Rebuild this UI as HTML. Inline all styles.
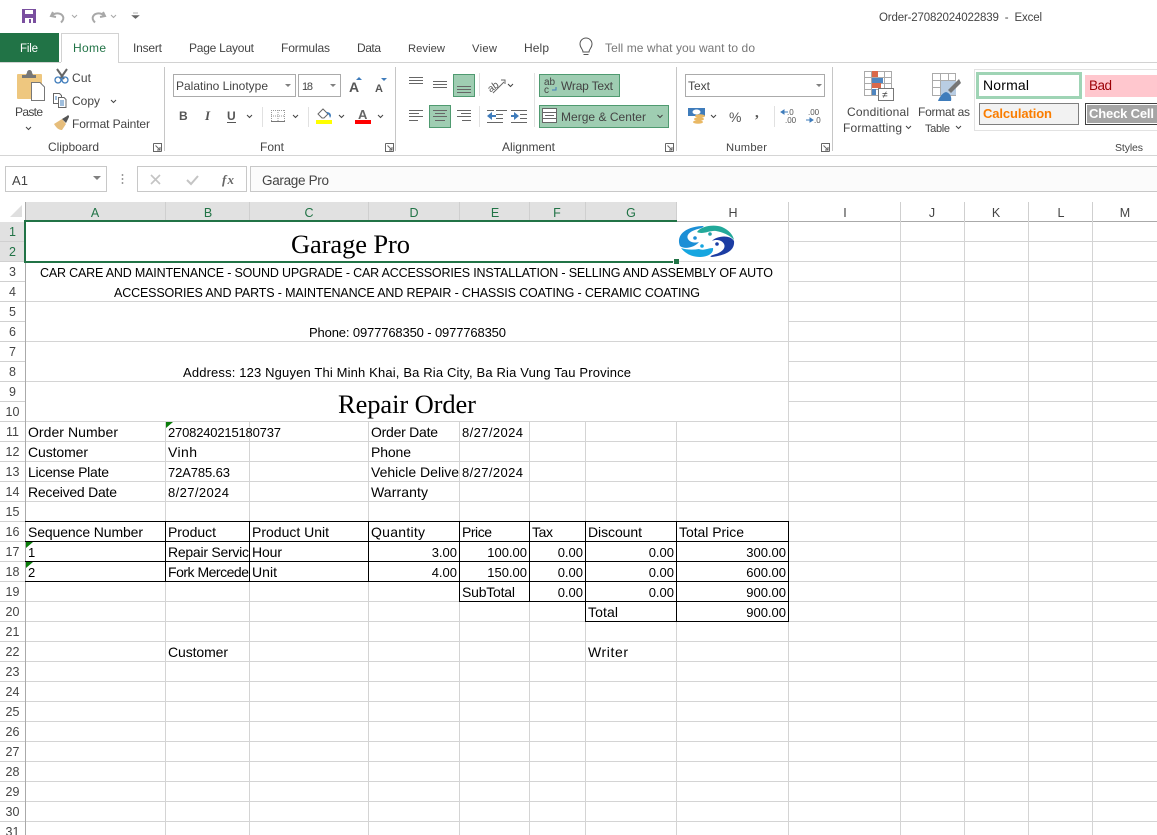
<!DOCTYPE html>
<html><head><meta charset="utf-8"><style>
html,body{margin:0;padding:0;background:#fff;width:1157px;height:835px;overflow:hidden}
svg{display:block;font-family:"Liberation Sans",sans-serif}
.r{font-size:12px;fill:#444}
.s{font-size:11.2px;fill:#444}
.c{font-size:14px;fill:#000}
.n{font-size:13px;fill:#000}
.h{font-size:12.5px;fill:#444}
.g{font-size:12.5px;fill:#217346}
</style></head><body>
<svg width="1157" height="835" viewBox="0 0 1157 835" xmlns="http://www.w3.org/2000/svg">
<defs>
<clipPath id="cb"><rect x="165" y="540" width="84" height="42"/></clipPath>
<clipPath id="cd"><rect x="369" y="460" width="90" height="22"/></clipPath>
<filter id="bl" x="-5%" y="-5%" width="110%" height="110%"><feGaussianBlur stdDeviation=".35"/></filter>
</defs>
<rect width="1157" height="835" fill="#fff"/>

<!-- quick access -->
<g shape-rendering="crispEdges"><rect x="22" y="9" width="14" height="14" fill="#7a4f9f"/><rect x="25" y="10" width="8" height="4" fill="#fff"/><rect x="25" y="18" width="8" height="5" fill="#fff"/><rect x="29" y="19" width="2" height="4" fill="#7a4f9f"/></g>
<g fill="none" stroke="#a8a8a8" stroke-width="2"><path d="M53 12l-2 4 5 1M52 15.500c3-3 9-3 11 1 1 2 0 4-2 6"/><path d="M103 12l2 4-5 1M104 15.500c-3-3-9-3-11 1-1 2 0 4 2 6"/></g>
<g fill="none" stroke="#a8a8a8"><path d="M72 15l2.500 2.500L77 15M111 15l2.500 2.500L116 15"/></g>
<path d="M133 13h5M132 15.500h7l-3.500 3z" fill="#666" stroke="#666" stroke-width=".6"/>
<text x="879" y="21" font-size="11.5" fill="#444" textLength="163" lengthAdjust="spacing" xml:space="preserve">Order-27082024022839  -  Excel</text>

<!-- tabs -->
<rect x="0" y="33" width="59" height="29" fill="#217346"/>
<text x="20" y="52" font-size="11.5" fill="#fff" textLength="18">File</text>
<path d="M61.500 62V33.500H118.500V62" fill="#fff" stroke="#d2d2d2"/>
<path d="M0 62.500H61M118 62.500H1157" stroke="#d2d2d2" shape-rendering="crispEdges"/>
<text x="73" y="52" font-size="12" fill="#217346" textLength="33">Home</text>
<text x="133" y="52" class="r" textLength="29">Insert</text>
<text x="189" y="52" class="r" textLength="65">Page Layout</text>
<text x="281" y="52" class="r" textLength="49">Formulas</text>
<text x="357" y="52" class="r" textLength="24">Data</text>
<text x="408" y="52" class="s" textLength="37">Review</text>
<text x="472" y="52" class="s" textLength="25">View</text>
<text x="524" y="52" class="r" textLength="25">Help</text>
<g fill="none" stroke="#555"><path d="M583 52c0-3-3-4-3-8a6 6 0 0 1 12 0c0 4-3 5-3 8z"/><path d="M583.500 54.500h5"/></g>
<text x="605" y="52" font-size="12" fill="#777" textLength="150">Tell me what you want to do</text>

<!-- ribbon structure -->
<g stroke="#c6c6c6" shape-rendering="crispEdges">
<path d="M164.500 67V151M395.500 67V151M676.500 67V151M832.500 67V151"/>
<path d="M262.500 107V127M308.500 107V127M479.500 73V96M479.500 106V127M534.500 73V127M774.500 106V127" stroke="#e1e1e1"/>
</g>
<path d="M0 155.500H1157" stroke="#d5d5d5" shape-rendering="crispEdges"/>

<!-- clipboard -->
<rect x="17" y="74" width="25" height="25" rx="1" fill="#eec77f"/>
<path d="M22 78v-3h4l1-2.500a2.500 2.500 0 0 1 5 0l1 2.500h3v3z" fill="#777"/>
<path d="M31.500 82.500H40L44.500 87V100.500H31.500Z" fill="#fff" stroke="#777"/>
<text x="15" y="116" class="r" textLength="28">Paste</text>
<path d="M26 127l2.500 2.500L31 127" fill="none" stroke="#444"/>
<g fill="none"><path d="M57 69l7 10M67 69l-7 10" stroke="#666" stroke-width="2"/><circle cx="58" cy="80" r="3" stroke="#3f7cbb" stroke-width="1.300"/><circle cx="65" cy="80" r="3" stroke="#3f7cbb" stroke-width="1.300"/></g>
<text x="72" y="82" class="r" textLength="19">Cut</text>
<g fill="#fff" stroke="#666"><path d="M53.500 93.500h6l2 2v8h-8z"/><path d="M58.500 97.500h5.500l2 2v8h-7.500z"/></g>
<path d="M60 101h4M60 103h4M60 105h4M55 97h2M55 99h2" stroke="#3f7cbb"/>
<text x="72" y="105" class="r" textLength="28">Copy</text>
<path d="M111 100l2.500 2.500L116 100" fill="none" stroke="#444"/>
<path d="M54 124l8-5 4 5-4 6c-4 0-6-3-8-6z" fill="#e6bd7b"/>
<path d="M62 119l5-3 1-1 1 1 0 1 -3 6z" fill="#555"/>
<text x="72" y="128" class="r" textLength="78">Format Painter</text>
<text x="48" y="151" class="r" textLength="51">Clipboard</text>
<path d="M153.500 143.500h8v8M153.500 143.500v8h8M155.500 145.500l4.500 4.500M160 147v3h-3" fill="none" stroke="#666"/>

<!-- font -->
<g fill="#fff" stroke="#ababab" shape-rendering="crispEdges"><rect x="173.500" y="74.500" width="122" height="22"/><rect x="298.500" y="74.500" width="42" height="22"/><rect x="685.500" y="74.500" width="139" height="22"/></g>
<text x="176" y="90" class="r" textLength="92">Palatino Linotype</text>
<text x="302" y="90" font-size="11" fill="#444" textLength="11">18</text>
<path d="M285 84h6l-3 3zM330 84h6l-3 3zM816 84h6l-3 3z" fill="#808080"/>
<text x="349" y="92" font-size="14" fill="#555" font-weight="bold" textLength="11">A</text>
<path d="M356 80l3-3 3 3z" fill="#3f7cbb"/>
<text x="375" y="92" font-size="11" fill="#555" font-weight="bold" textLength="9">A</text>
<path d="M381 78h6l-3 3z" fill="#3f7cbb"/>
<text x="179" y="120" font-size="12" font-weight="bold" fill="#555">B</text>
<text x="205" y="120" font-size="13" font-style="italic" font-weight="bold" fill="#555" font-family="Liberation Serif">I</text>
<text x="227" y="120" font-size="12" font-weight="bold" fill="#555">U</text>
<path d="M227 122.500h9" stroke="#555"/>
<g fill="none" stroke="#444"><path d="M247 115l2.500 2.500L252 115M293 115l2.500 2.500L298 115M339 115l2.500 2.500L344 115M378 115l2.500 2.500L383 115"/></g>
<g shape-rendering="crispEdges"><path d="M271.500 110v11M278 110v11M284.500 110v11M271 110.500h14M271 116h14" stroke="#999" stroke-dasharray="1 1"/><path d="M271 121.500h14" stroke="#777"/></g>
<path d="M318 114l5-5 5 5-4 4h-2z" fill="#fff" stroke="#666"/><path d="M326 112c3 0 5 1 5 4l-1 2-1-3z" fill="#3f7cbb"/>
<rect x="316" y="120" width="16" height="4" fill="#ffff00"/>
<text x="358" y="119" font-size="13" font-weight="bold" fill="#666">A</text>
<rect x="355" y="120" width="16" height="4" fill="#f00"/>
<text x="260" y="151" class="r" textLength="24">Font</text>
<path d="M385.500 143.500h8v8M385.500 143.500v8h8M387.500 145.500l4.500 4.500M392 147v3h-3" fill="none" stroke="#666"/>

<!-- alignment -->
<g shape-rendering="crispEdges"><rect x="453.500" y="74.500" width="21" height="22" fill="#9fcdb2" stroke="#4f9a70"/><rect x="429.500" y="105.500" width="21" height="22" fill="#9fcdb2" stroke="#4f9a70"/><rect x="539.500" y="74.500" width="80" height="22" fill="#9fcdb2" stroke="#4f9a70"/><rect x="539.500" y="105.500" width="129" height="22" fill="#9fcdb2" stroke="#4f9a70"/></g>
<g stroke="#666" shape-rendering="crispEdges" fill="none">
<path d="M409 77.500h14M409 80.500h14M409 83.500h14"/>
<path d="M433 81.500h14M433 84.500h14M433 87.500h14"/>
<path d="M457 86.500h14M457 89.500h14M457 92.500h14"/>
<path d="M409 110.500h14M409 113.500h10M409 116.500h14M409 120.500h9"/>
<path d="M433 110.500h14M435 113.500h10M433 116.500h14M435 120.500h10"/>
<path d="M457 110.500h14M461 113.500h10M457 116.500h14M462 120.500h9"/>
<path d="M496 110.500h11M496 114.500h7M496 118.500h7M487 122.500h16M487 110.500h7"/>
<path d="M511 110.500h16M520 114.500h7M520 118.500h7M511 122.500h16"/>
</g>
<path d="M487 116l5-4v3h4v2h-4v3zM519 116l-5-4v3h-3v2h3v3z" fill="#3f7cbb"/>
<g transform="rotate(-35 496 85)"><text x="487" y="88" font-size="10" fill="#555">ab</text></g>
<path d="M493 93l11-11" stroke="#666"/><path d="M501 80h4v4" fill="none" stroke="#666"/>
<path d="M508 84l2.500 2.500L513 84" fill="none" stroke="#444"/>
<text x="544" y="85" font-size="10" fill="#444">ab</text><text x="544" y="93" font-size="10" fill="#444">c</text>
<path d="M556 87v3h-4" fill="none" stroke="#3f7cbb"/>
<text x="561" y="90" class="r" textLength="52">Wrap Text</text>
<rect x="542.500" y="108.500" width="14" height="14" fill="#fff" stroke="#666"/>
<path d="M542 112.500h15M542 118.500h15M545 115.500h9" stroke="#666"/>
<text x="561" y="121" class="r" textLength="85">Merge &amp; Center</text>
<path d="M657.500 115l2.500 2.500L662.500 115" fill="none" stroke="#444"/>
<text x="502" y="151" class="r" textLength="53">Alignment</text>
<path d="M665.500 143.500h8v8M665.500 143.500v8h8M667.500 145.500l4.500 4.500M672 147v3h-3" fill="none" stroke="#666"/>

<!-- number -->
<text x="688" y="90" class="r" textLength="22">Text</text>
<rect x="688" y="108" width="17" height="8" fill="#3f7cbb"/><ellipse cx="696.500" cy="112" rx="4" ry="2.500" fill="#fff"/>
<ellipse cx="700" cy="116" rx="5" ry="1.800" fill="#e9b864"/><ellipse cx="699" cy="119" rx="5" ry="1.800" fill="#e9b864"/><ellipse cx="698" cy="122" rx="5" ry="1.800" fill="#e9b864"/>
<path d="M711 115l2.500 2.500L716 115" fill="none" stroke="#444"/>
<text x="729" y="122" font-size="14" fill="#555" textLength="14">%</text>
<text x="755" y="117" font-size="15" font-weight="bold" font-family="Liberation Serif" fill="#555">,</text>
<text x="787" y="115" font-size="8" fill="#555">.0</text><text x="785" y="123" font-size="8" fill="#555">.00</text>
<path d="M781 112h7M781 112l3-2v4z" stroke="#3f7cbb" fill="#3f7cbb"/>
<text x="808" y="115" font-size="8" fill="#555">.00</text><text x="814" y="123" font-size="8" fill="#555">.0</text>
<path d="M806 120h7M813 120l-3-2v4z" stroke="#3f7cbb" fill="#3f7cbb"/>
<text x="726" y="151" class="s" textLength="41">Number</text>
<path d="M821.500 143.500h8v8M821.500 143.500v8h8M823.500 145.500l4.500 4.500M828 147v3h-3" fill="none" stroke="#666"/>

<!-- styles -->
<g shape-rendering="crispEdges">
<path d="M864.500 71.500h27v24h-27zM864 77.500h28M864 83.500h28M864 89.500h28M871.500 71v24M884.500 71v24" fill="#fff" stroke="#aaa"/>
<rect x="872" y="71" width="6" height="6" fill="#d9694a"/><rect x="872" y="78" width="11" height="5" fill="#4f86c0"/><rect x="872" y="83" width="9" height="5" fill="#d9694a"/><rect x="872" y="89" width="4" height="6" fill="#4f86c0"/>
<rect x="878.500" y="88.500" width="15" height="12" fill="#fff" stroke="#777"/>
<path d="M932.500 73.500h23v22h-23zM932 80.500h24M932 87.500h24M940.500 73v22M948.500 73v22" fill="#fff" stroke="#aaa"/>
<rect x="941" y="81" width="15" height="14" fill="#b9cde3"/>
</g>
<text x="882" y="98" font-size="10" fill="#444">≠</text>
<path d="M959 79l-11 11 3 3 10-10z" fill="#777"/>
<path d="M938 101c1-3 4-8 8-9 4 1 6 5 5 9z" fill="#3f7cbb"/>
<text x="847" y="116" class="r" textLength="62">Conditional</text>
<text x="843" y="132" class="r" textLength="59">Formatting</text>
<path d="M906 126l2.500 2.500L911 126" fill="none" stroke="#444"/>
<text x="918" y="116" class="r" textLength="52">Format as</text>
<text x="925" y="132" font-size="11" fill="#444" textLength="25">Table</text>
<path d="M956 126l2.500 2.500L961 126" fill="none" stroke="#444"/>
<g shape-rendering="crispEdges">
<rect x="974.500" y="69.500" width="190" height="61" fill="#fff" stroke="#e2e2e2"/>
<rect x="977.500" y="73.500" width="103" height="24" fill="#fff" stroke="#9fd4b5" stroke-width="3"/>
<rect x="1085" y="75" width="72" height="22" fill="#ffc7ce"/>
<rect x="979.500" y="103.500" width="99" height="21" fill="#f2f2f2" stroke="#7f7f7f"/>
<rect x="1085" y="103" width="72" height="22" fill="#3f3f3f"/><rect x="1086" y="104" width="71" height="20" fill="#fff"/><rect x="1087" y="105" width="70" height="18" fill="#a5a5a5"/>
</g>
<text x="983" y="90" font-size="14" fill="#000" textLength="46">Normal</text>
<text x="1089" y="90" font-size="13.500" fill="#9c0006" textLength="23">Bad</text>
<text x="983" y="118" font-size="13" font-weight="bold" fill="#fa7d00" textLength="69">Calculation</text>
<text x="1089" y="118" font-size="13" font-weight="bold" fill="#fff" textLength="65">Check Cell</text>
<text x="1115" y="151" font-size="10.500" fill="#444" textLength="28">Styles</text>

<!-- formula bar -->
<rect x="0" y="166" width="1157" height="26" fill="#fff"/>
<g shape-rendering="crispEdges" stroke="#c8c8c8">
<rect x="5.500" y="166.500" width="101" height="25" fill="#fff"/>
<rect x="137.500" y="166.500" width="109" height="25" fill="#fff"/>
<rect x="250.500" y="166.500" width="908" height="25" fill="#fbfbfb"/>
</g>
<text x="12" y="185" font-size="13" fill="#444" textLength="16">A1</text>
<path d="M93 176h8l-4 4z" fill="#808080"/>
<path d="M122.500 174v2M122.500 178v2M122.500 182v2" stroke="#999" stroke-width="1.500"/>
<path d="M151 175l9 9M160 175l-9 9" stroke="#c4c4c4" stroke-width="1.600"/>
<path d="M187 180l4 4 7-8" fill="none" stroke="#c4c4c4" stroke-width="2"/>
<text x="222" y="184" font-size="13" font-style="italic" font-family="Liberation Serif" font-weight="bold" fill="#666" textLength="12">fx</text>
<text x="262" y="185" font-size="13.500" fill="#444" textLength="67">Garage Pro</text>

<!-- col header -->
<rect x="26" y="202" width="651" height="19" fill="#e1e1e1"/>
<rect x="0" y="222" width="25" height="39" fill="#e1e1e1"/>
<path d="M22 205V217H10Z" fill="#dfdfdf"/>
<g shape-rendering="crispEdges" stroke="#bdbdbd" fill="none">
<path d="M165.500 202V221M249.500 202V221M368.500 202V221M459.500 202V221M529.500 202V221M585.500 202V221M676.500 202V221M788.500 202V221M900.500 202V221M964.500 202V221M1028.500 202V221M1092.500 202V221" stroke="#cfcfcf"/>
<path d="M677 221.500H1157" stroke="#aaa"/>
<path d="M25.500 202V835" stroke="#aaa"/>
<path d="M0 241.500H25M0 261.500H25M0 281.500H25M0 301.500H25M0 321.500H25M0 341.500H25M0 361.500H25M0 381.500H25M0 401.500H25M0 421.500H25M0 441.500H25M0 461.500H25M0 481.500H25M0 501.500H25M0 521.500H25M0 541.500H25M0 561.500H25M0 581.500H25M0 601.500H25M0 621.500H25M0 641.500H25M0 661.500H25M0 681.500H25M0 701.500H25M0 721.500H25M0 741.500H25M0 761.500H25M0 781.500H25M0 801.500H25M0 821.500H25" stroke="#d0d0d0"/>
</g>
<g text-anchor="middle">
<text x="95" y="217" class="g">A</text><text x="208" y="217" class="g">B</text><text x="309" y="217" class="g">C</text><text x="414" y="217" class="g">D</text><text x="495" y="217" class="g">E</text><text x="557" y="217" class="g">F</text><text x="631" y="217" class="g">G</text>
<text x="733" y="217" class="h">H</text><text x="845" y="217" class="h">I</text><text x="932" y="217" class="h">J</text><text x="996" y="217" class="h">K</text><text x="1061" y="217" class="h">L</text><text x="1125" y="217" class="h">M</text>
<text x="12.500" y="236" class="g">1</text><text x="12.500" y="256" class="g">2</text>
<text x="12.500" y="276" class="h">3</text><text x="12.500" y="296" class="h">4</text><text x="12.500" y="316" class="h">5</text><text x="12.500" y="336" class="h">6</text><text x="12.500" y="356" class="h">7</text><text x="12.500" y="376" class="h">8</text><text x="12.500" y="396" class="h">9</text><text x="12.500" y="416" class="h">10</text>
<text x="12.500" y="436" class="h">11</text><text x="12.500" y="456" class="h">12</text><text x="12.500" y="476" class="h">13</text><text x="12.500" y="496" class="h">14</text><text x="12.500" y="516" class="h">15</text><text x="12.500" y="536" class="h">16</text><text x="12.500" y="556" class="h">17</text><text x="12.500" y="576" class="h">18</text><text x="12.500" y="596" class="h">19</text><text x="12.500" y="616" class="h">20</text>
<text x="12.500" y="636" class="h">21</text><text x="12.500" y="656" class="h">22</text><text x="12.500" y="676" class="h">23</text><text x="12.500" y="696" class="h">24</text><text x="12.500" y="716" class="h">25</text><text x="12.500" y="736" class="h">26</text><text x="12.500" y="756" class="h">27</text><text x="12.500" y="776" class="h">28</text><text x="12.500" y="796" class="h">29</text><text x="12.500" y="816" class="h">30</text><text x="12.500" y="836" class="h">31</text>
</g>

<!-- gridlines -->
<g shape-rendering="crispEdges" stroke="#d4d4d4" fill="none">
<path d="M788.500 221V835M900.500 221V835M964.500 221V835M1028.500 221V835M1092.500 221V835"/>
<path d="M165.500 421V835M249.500 421V835M368.500 421V835M459.500 421V835M529.500 421V835M585.500 421V835M676.500 421V835"/>
<path d="M788 241.500H1157M788 281.500H1157M788 321.500H1157M788 361.500H1157M788 401.500H1157"/>
<path d="M26 261.500H1157M26 301.500H1157M26 341.500H1157M26 381.500H1157M26 421.500H1157M26 441.500H1157M26 461.500H1157M26 481.500H1157M26 501.500H1157M26 521.500H1157M26 541.500H1157M26 561.500H1157M26 581.500H1157M26 601.500H1157M26 621.500H1157M26 641.500H1157M26 661.500H1157M26 681.500H1157M26 701.500H1157M26 721.500H1157M26 741.500H1157M26 761.500H1157M26 781.500H1157M26 801.500H1157M26 821.500H1157"/>
</g>

<!-- black borders -->
<g shape-rendering="crispEdges" stroke="#000" fill="none">
<path d="M25 521.500H789M25 541.500H789M25 561.500H789M25 581.500H789M459 601.500H789M585 621.500H789"/>
<path d="M165.500 521V582M249.500 521V582M368.500 521V582M459.500 521V602M529.500 521V602M585.500 521V622M676.500 521V622M788.500 521V622"/>
</g>

<!-- cells -->
<text x="291" y="253" font-family="Liberation Serif" font-size="26.500" fill="#000" textLength="119">Garage Pro</text>
<text x="40" y="277" font-size="12.500" fill="#000" textLength="733">CAR CARE AND MAINTENANCE - SOUND UPGRADE - CAR ACCESSORIES INSTALLATION - SELLING AND ASSEMBLY OF AUTO</text>
<text x="114" y="297" font-size="12.500" fill="#000" textLength="586">ACCESSORIES AND PARTS - MAINTENANCE AND REPAIR - CHASSIS COATING - CERAMIC COATING</text>
<text x="309" y="337" class="n" textLength="197">Phone: 0977768350 - 0977768350</text>
<text x="183" y="377" class="n" textLength="448">Address: 123 Nguyen Thi Minh Khai, Ba Ria City, Ba Ria Vung Tau Province</text>
<text x="338" y="413" font-family="Liberation Serif" font-size="26.500" fill="#000" textLength="138">Repair Order</text>

<text x="28" y="437" class="c" textLength="90">Order Number</text>
<text x="168" y="437" class="n" textLength="113">2708240215180737</text>
<text x="371" y="437" class="c" textLength="67">Order Date</text>
<text x="462" y="437" class="n" textLength="61">8/27/2024</text>
<text x="28" y="457" class="c" textLength="60">Customer</text>
<text x="168" y="457" class="c" textLength="29">Vinh</text>
<text x="371" y="457" class="c" textLength="40">Phone</text>
<text x="28" y="477" class="c" textLength="81">License Plate</text>
<text x="168" y="477" class="n" textLength="62">72A785.63</text>
<text x="371" y="477" class="c" textLength="88" clip-path="url(#cd)">Vehicle Delive</text>
<text x="462" y="477" class="n" textLength="61">8/27/2024</text>
<text x="28" y="497" class="c" textLength="89">Received Date</text>
<text x="168" y="497" class="n" textLength="61">8/27/2024</text>
<text x="371" y="497" class="c" textLength="57">Warranty</text>

<text x="28" y="537" class="c" textLength="115">Sequence Number</text>
<text x="168" y="537" class="c" textLength="48">Product</text>
<text x="252" y="537" class="c" textLength="77">Product Unit</text>
<text x="371" y="537" class="c" textLength="54">Quantity</text>
<text x="462" y="537" class="c" textLength="30">Price</text>
<text x="532" y="537" class="c" textLength="21">Tax</text>
<text x="588" y="537" class="c" textLength="54">Discount</text>
<text x="679" y="537" class="c" textLength="65">Total Price</text>

<text x="28" y="557" class="n">1</text>
<text x="168" y="557" class="c" textLength="81" clip-path="url(#cb)">Repair Servic</text>
<text x="252" y="557" class="c" textLength="30">Hour</text>
<text x="28" y="577" class="n">2</text>
<text x="168" y="577" class="c" textLength="81" clip-path="url(#cb)">Fork Mercede</text>
<text x="252" y="577" class="c" textLength="25">Unit</text>

<g text-anchor="end">
<text x="457" y="557" class="n">3.00</text><text x="527" y="557" class="n">100.00</text><text x="583" y="557" class="n">0.00</text><text x="674" y="557" class="n">0.00</text><text x="786" y="557" class="n">300.00</text>
<text x="457" y="577" class="n">4.00</text><text x="527" y="577" class="n">150.00</text><text x="583" y="577" class="n">0.00</text><text x="674" y="577" class="n">0.00</text><text x="786" y="577" class="n">600.00</text>
<text x="583" y="597" class="n">0.00</text><text x="674" y="597" class="n">0.00</text><text x="786" y="597" class="n">900.00</text>
<text x="786" y="617" class="n">900.00</text>
</g>
<text x="462" y="597" class="c" textLength="53">SubTotal</text>
<text x="588" y="617" class="c" textLength="30">Total</text>
<text x="168" y="657" class="c" textLength="60">Customer</text>
<text x="588" y="657" class="c" textLength="40">Writer</text>

<!-- green triangles -->
<path d="M166 422h7l-7 6zM26 542h7l-7 6zM26 562h7l-7 6z" fill="#0a7c0a"/>

<!-- selection -->
<g shape-rendering="crispEdges" fill="#217346">
<rect x="24" y="220" width="653" height="2"/>
<rect x="24" y="220" width="2" height="42"/>
<rect x="24" y="261" width="649" height="2"/>
</g>
<rect x="677" y="222" width="58" height="37" fill="#fff"/>
<rect x="674" y="259" width="5" height="5" fill="#217346" shape-rendering="crispEdges"/>

<!-- logo -->
<g filter="url(#bl)">
<path d="M680 246C676 236 684 227 702 226C706 226 702 228 698 229C690 231 686 235 688 239C690 243 696 243 699 242C695 247 685 250 680 246Z" fill="#1b8fd6"/>
<path d="M697 232C701 226 714 224 722 227C729 230 733 235 734 240C730 235 722 232 716 231C710 230 703 235 697 232Z" fill="#23a99a"/>
<path d="M734 241C735 250 727 255 712 257C708 257 712 255 716 254C722 252 726 248 724 244C722 240 716 239 712 241C716 236 730 234 734 241Z" fill="#1c3da3"/>
<path d="M681 248C687 250 693 250 699 249C704 251 708 248 713 248C714 253 708 257 700 257C691 257 685 253 681 248Z" fill="#19a6e0"/>
<circle cx="695" cy="238" r="1.800" fill="#1b8fd6"/><circle cx="710" cy="234" r="1.800" fill="#23a0a8"/><circle cx="717" cy="244" r="1.800" fill="#1c3da3"/><circle cx="702" cy="246" r="1.800" fill="#19a6e0"/>
</g>
</svg>
</body></html>
